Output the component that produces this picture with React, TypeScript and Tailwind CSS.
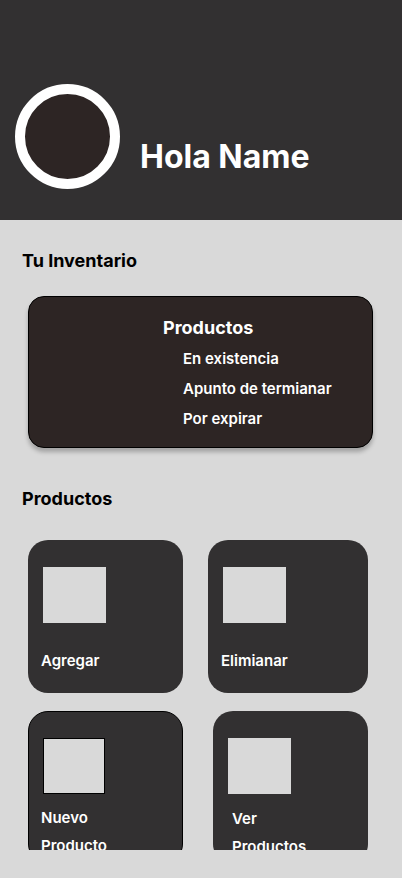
import React from 'react';

const Tile: React.FC<{
  label: string[];
  width: string;
  bordered?: boolean;
  labelGap: string;
  labelPad?: string;
}> = ({ label, width, bordered, labelGap, labelPad = 'pl-[13px]' }) => {
  return (
    <div
      className={`${width} h-[153px] shrink-0 bg-[#323031] rounded-[20px] ${
        bordered ? 'border border-black pt-[26px]' : 'pt-[27px]'
      }`}
    >
      <div
        className={`h-[56px] bg-[#d9d9d9] ${
          bordered ? 'ml-[14px] w-[62px] border border-black' : 'ml-[15px] w-[63px]'
        }`}
      />
      <div className={`${labelGap} ${labelPad} text-white text-[15px] font-semibold leading-[28px]`}>
        {label.map((l) => (
          <div key={l}>{l}</div>
        ))}
      </div>
    </div>
  );
};

export default function App() {
  return (
    <div
      className="w-[402px] h-[878px] bg-[#d9d9d9] overflow-hidden"
      style={{ fontFamily: 'Inter, "Noto Sans", sans-serif' }}
    >
      <div className="h-[850px] overflow-hidden">
        <header className="h-[220px] bg-[#323031] flex items-start pt-[84px] pl-[15px]">
          <div className="w-[105px] h-[105px] rounded-full border-[10px] border-white bg-[#2d2524] shrink-0" />
          <h1 className="ml-[20px] mt-[53px] text-white text-[32px] font-bold leading-[40px]">Hola Name</h1>
        </header>

        <h2 className="mt-[29px] pl-[22px] text-black text-[18px] font-bold leading-[24px]">Tu Inventario</h2>

        <div className="mt-[23px] ml-[28px] w-[345px] h-[152px] rounded-[16px] bg-[#2d2524] border border-black shadow-[0_4px_4px_rgba(0,0,0,0.25)] pt-[19px] pl-[134px]">
          <div className="text-white text-[18px] font-bold leading-[24px]">Productos</div>
          <ul className="mt-[4px] pl-[20px] text-white text-[15px] font-semibold leading-[30px]">
            <li>En existencia</li>
            <li>Apunto de termianar</li>
            <li>Por expirar</li>
          </ul>
        </div>

        <h2 className="mt-[39px] pl-[22px] text-black text-[18px] font-bold leading-[24px]">Productos</h2>

        <div className="mt-[29px] pl-[28px] flex gap-[25px]">
          <Tile label={['Agregar']} width="w-[155px]" labelGap="mt-[24px]" />
          <Tile label={['Elimianar']} width="w-[160px]" labelGap="mt-[24px]" />
        </div>

        <div className="mt-[18px] pl-[28px] flex gap-[30px]">
          <Tile label={['Nuevo', 'Producto']} width="w-[155px]" bordered labelGap="mt-[10px]" labelPad="pl-[12px]" />
          <Tile label={['Ver', 'Productos']} width="w-[155px]" labelGap="mt-[11px]" labelPad="pl-[19px]" />
        </div>
      </div>
    </div>
  );
}
